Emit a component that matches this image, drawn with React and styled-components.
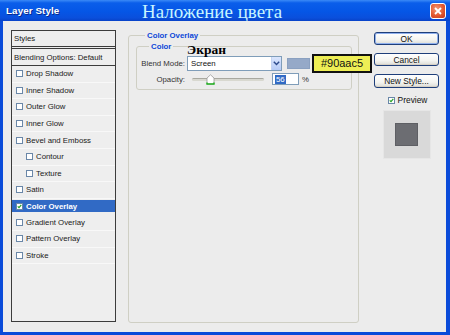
import React from "react";
import styled, { createGlobalStyle } from "styled-components";

const GlobalStyle = createGlobalStyle`
  html, body { margin: 0; padding: 0; background: #ffffff; }
  body { font-family: "Liberation Sans", Arial, sans-serif; }
  * { box-sizing: border-box; }
`;

const Window = styled.div`
  width: 450px;
  height: 335px;
  display: flex;
  flex-direction: column;
  background: #0a4bd9;
`;

const TitleBar = styled.div`
  height: 21px;
  flex: 0 0 21px;
  display: flex;
  align-items: center;
  padding: 0 4px 0 6px;
  background: linear-gradient(#3b8af7 0%, #0a5eea 14%, #0556e6 55%, #0a4fdc 85%, #0842c8 100%);
`;

const WindowTitle = styled.span`
  color: #ffffff;
  font-weight: bold;
  font-size: 9.8px;
  letter-spacing: 0.1px;
  text-shadow: 1px 1px 0 #0a2a8c;
  width: 136px;
`;

const Caption = styled.span`
  flex: 1;
  color: #c8f4ff;
  font-family: "Liberation Serif", "Times New Roman", serif;
  font-size: 19px;
  line-height: 21px;
  margin-top: 1px;
`;

const CloseButton = styled.div`
  width: 16px;
  height: 16px;
  border-radius: 3px;
  border: 1px solid #ffffff;
  background: radial-gradient(circle at 40% 35%, #f49a78 0%, #e3582f 55%, #c2361a 100%);
  display: flex;
  align-items: center;
  justify-content: center;
`;

const Frame = styled.div`
  flex: 1;
  display: flex;
  padding: 0 4px 3px 3px;
`;

const Body = styled.div`
  flex: 1;
  display: flex;
  background: #ececec;
  padding: 9px 7px 9px 8px;
`;

const StylesPanel = styled.div`
  width: 105px;
  height: 292px;
  border: 1px solid #3c3c3c;
  background: #eeeeee;
  display: flex;
  flex-direction: column;
`;

const PanelHeader = styled.div`
  height: ${(p) => p.$h}px;
  display: flex;
  align-items: center;
  padding-left: 2px;
  font-size: 7.8px;
  color: #202020;
  border-bottom: ${(p) => p.$line};
`;

const StyleRow = styled.div`
  height: 16.6px;
  flex: 0 0 16.6px;
  display: flex;
  align-items: center;
  gap: 3px;
  padding-left: ${(p) => (p.$indent ? 14 : 4)}px;
  border-bottom: 1px solid #f8f8f8;
  font-size: 7.8px;
  color: #202020;
  background: ${(p) => (p.$selected ? "#316ac5" : "transparent")};
  ${(p) => p.$selected && "color: #ffffff; font-weight: bold; margin: 1px 0 0 0; height: 14.6px; flex-basis: 14.6px; border-bottom: 2px solid #eeeeee;"}
`;

const Check = styled.span`
  width: 7px;
  height: 7px;
  flex: 0 0 7px;
  border: 1px solid #6a87a8;
  background: #ffffff;
  display: flex;
  align-items: center;
  justify-content: center;
`;

const Main = styled.div`
  width: 231px;
  margin-left: 12px;
  display: flex;
  flex-direction: column;
`;

const Group = styled.fieldset`
  margin: 0;
  border: 1px solid #cfcfc4;
  border-radius: 3px;
  padding: ${(p) => p.$pad};
  height: ${(p) => p.$height};
  min-width: 0;
`;

const Legend = styled.legend`
  font-size: 7.8px;
  font-weight: bold;
  color: #0b47d8;
  padding: 0 2px;
  margin-left: ${(p) => p.$ml}px;
  line-height: 11px;
`;

const FieldRow = styled.div`
  display: flex;
  align-items: center;
  height: ${(p) => p.$h}px;
  position: relative;
`;

const FieldLabel = styled.span`
  width: 44px;
  flex: 0 0 44px;
  white-space: nowrap;
  text-align: right;
  font-size: 7.8px;
  color: #333333;
  margin-right: 2px;
`;

const Select = styled.div`
  width: 95px;
  flex: 0 0 95px;
  height: 15px;
  border: 1px solid #7f9db9;
  background: #ffffff;
  display: flex;
  align-items: center;
  font-size: 7.8px;
  color: #111111;
  padding-left: 3px;
`;

const SelectText = styled.span`
  flex: 1;
`;

const SelectArrow = styled.span`
  width: 10px;
  height: 13px;
  background: linear-gradient(#dbe6fd, #b6cbf7);
  border-left: 1px solid #c5d4f2;
  display: flex;
  align-items: center;
  justify-content: center;
`;

const Annotation = styled.span`
  position: absolute;
  left: 46px;
  top: -12px;
  font-family: "Liberation Serif", "Times New Roman", serif;
  font-weight: bold;
  font-size: 13.5px;
  color: #000000;
  line-height: 14px;
`;

const Swatch = styled.span`
  width: 23px;
  height: 11px;
  flex: 0 0 23px;
  margin-left: 5px;
  background: #95a9c8;
  border: 1px solid #8aa0c0;
`;

const HexTag = styled.span`
  margin-left: 2px;
  width: 60px;
  flex: 0 0 60px;
  height: 19px;
  background: #eeee55;
  border: 2px solid #111111;
  display: flex;
  align-items: center;
  justify-content: center;
  font-size: 11px;
  color: #111111;
`;

const Slider = styled.div`
  width: 72px;
  flex: 0 0 72px;
  height: 11px;
  margin-left: 5px;
  display: flex;
  align-items: center;
  position: relative;
`;

const Track = styled.div`
  flex: 1;
  height: 3px;
  border-radius: 2px;
  background: #d8d8d0;
  border-top: 1px solid #a8a8a0;
`;

const Thumb = styled.svg`
  position: absolute;
  left: 14px;
  top: 0;
`;

const NumberBox = styled.div`
  width: 27px;
  flex: 0 0 27px;
  height: 12px;
  margin-left: 8px;
  border: 1px solid #7f9db9;
  background: #ffffff;
  display: flex;
  align-items: center;
  padding-left: 2px;
  font-size: 7.8px;
`;

const Selected = styled.span`
  background: #316ac5;
  color: #ffffff;
  padding: 0 1px;
  line-height: 9px;
`;

const Percent = styled.span`
  margin-left: 3px;
  font-size: 7.8px;
  color: #333333;
`;

const Side = styled.div`
  width: 65px;
  margin-left: 15px;
  padding-top: 2px;
  display: flex;
  flex-direction: column;
  align-items: center;
`;

const Button = styled.div`
  width: 65px;
  height: ${(p) => p.$h || 13}px;
  margin-bottom: 8px;
  border: 1px solid #1f3f7a;
  border-radius: 3px;
  background: linear-gradient(#ffffff 0%, #f4f4f0 60%, #dcdcd6 100%);
  box-shadow: ${(p) => (p.$default ? "inset 0 0 0 1px #8fb0ee" : "inset 0 -1px 0 #d6d0c4")};
  display: flex;
  align-items: center;
  justify-content: center;
  font-size: 8.4px;
  color: #111111;
`;

const PreviewRow = styled.div`
  display: flex;
  align-items: center;
  gap: 3px;
  margin-top: -1px;
  font-size: 8.4px;
  color: #111111;
  padding-left: 2px;
`;

const PreviewBox = styled.div`
  width: 48px;
  height: 49px;
  margin-top: 5px;
  background: #d9d9d9;
  border: 1px solid #e6e6e6;
  display: flex;
  align-items: center;
  justify-content: center;
`;

const PreviewSquare = styled.div`
  width: 23px;
  height: 23px;
  background: #6c6d72;
  border: 1px solid #5e5f64;
`;

const Tick = () => (
  <svg width="7" height="7" viewBox="0 0 7 7">
    <path d="M1 3.4 L2.8 5.2 L6 1.3" stroke="#21a121" strokeWidth="1.6" fill="none" />
  </svg>
);

const styleItems = [
  { name: "Drop Shadow" },
  { name: "Inner Shadow" },
  { name: "Outer Glow" },
  { name: "Inner Glow" },
  { name: "Bevel and Emboss" },
  { name: "Contour", indent: true },
  { name: "Texture", indent: true },
  { name: "Satin" },
  { name: "Color Overlay", selected: true },
  { name: "Gradient Overlay" },
  { name: "Pattern Overlay" },
  { name: "Stroke" },
];

export default function App() {
  return (
    <>
      <GlobalStyle />
      <Window>
        <TitleBar>
          <WindowTitle>Layer Style</WindowTitle>
          <Caption>Наложение цвета</Caption>
          <CloseButton>
            <svg width="10" height="10" viewBox="0 0 10 10">
              <path d="M2 2 L8 8 M8 2 L2 8" stroke="#ffffff" strokeWidth="1.8" />
            </svg>
          </CloseButton>
        </TitleBar>
        <Frame>
          <Body>
            <StylesPanel>
              <PanelHeader $h={18} $line="3px double #3c3c3c">Styles</PanelHeader>
              <PanelHeader $h={17} $line="1px solid #3c3c3c">Blending Options: Default</PanelHeader>
              {styleItems.map((item) => (
                <StyleRow key={item.name} $indent={item.indent} $selected={item.selected}>
                  <Check>{item.selected && <Tick />}</Check>
                  {item.name}
                </StyleRow>
              ))}
            </StylesPanel>

            <Main>
              <Group $pad="0 6px 0 7px" $height="293px">
                <Legend $ml={9}>Color Overlay</Legend>
                <Group $pad="3px 0 0 4px" $height="49px">
                  <Legend $ml={8}>Color</Legend>
                  <FieldRow $h={16}>
                    <FieldLabel>Blend Mode:</FieldLabel>
                    <Annotation>Экран</Annotation>
                    <Select>
                      <SelectText>Screen</SelectText>
                      <SelectArrow>
                        <svg width="7" height="5" viewBox="0 0 7 5">
                          <path d="M0.8 0.8 L3.5 3.6 L6.2 0.8" stroke="#2c4a8c" strokeWidth="1.4" fill="none" />
                        </svg>
                      </SelectArrow>
                    </Select>
                    <Swatch />
                    <HexTag>#90aac5</HexTag>
                  </FieldRow>
                  <FieldRow $h={16}>
                    <FieldLabel>Opacity:</FieldLabel>
                    <Slider>
                      <Track />
                      <Thumb width="9" height="11" viewBox="0 0 9 11">
                        <path d="M1 4 L4.5 0.8 L8 4 L8 10 L1 10 Z" fill="#ffffff" stroke="#9a9a9a" strokeWidth="0.8" />
                        <path d="M1 8.5 L1 10 L8 10 L8 8.5" fill="none" stroke="#22b222" strokeWidth="1.4" />
                      </Thumb>
                    </Slider>
                    <NumberBox>
                      <Selected>56</Selected>
                    </NumberBox>
                    <Percent>%</Percent>
                  </FieldRow>
                </Group>
              </Group>
            </Main>

            <Side>
              <Button $default>OK</Button>
              <Button>Cancel</Button>
              <Button $h={14}>New Style...</Button>
              <PreviewRow>
                <Check>
                  <Tick />
                </Check>
                Preview
              </PreviewRow>
              <PreviewBox>
                <PreviewSquare />
              </PreviewBox>
            </Side>
          </Body>
        </Frame>
      </Window>
    </>
  );
}
